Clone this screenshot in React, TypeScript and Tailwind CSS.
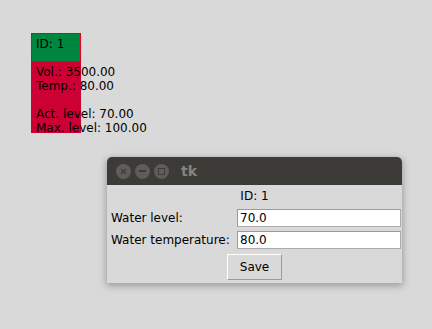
import React from 'react';

const font = { fontFamily: '"DejaVu Sans", Verdana, sans-serif' };

const TitleButton: React.FC<{ children: React.ReactNode }> = ({ children }) => (
  <div className="w-[15px] h-[15px] rounded-full bg-[#5e5d59] flex items-center justify-center">
    {children}
  </div>
);

const Entry: React.FC<{ value: string }> = ({ value }) => (
  <div className="h-[18px] bg-white border border-[#ababab] border-t-[#9a9a9a] border-l-[#9a9a9a] pl-[2px] text-[12px] leading-[16px] text-black">
    {value}
  </div>
);

export default function App() {
  return (
    <div className="w-[432px] h-[329px] bg-[#d9d9d9] overflow-hidden pt-[33px]" style={font}>
      {/* canvas item */}
      <div className="ml-[31px] w-[50px] h-[100px] bg-[#cc0033] text-[12px] leading-[14px] text-black whitespace-nowrap">
        <div className="h-[29px] bg-[#00873f] border border-[#e8001c] pl-[4px] pt-[3px]">ID: 1</div>
        <div className="pl-[5px] pt-[3px]">
          <div>Vol.: 3500.00</div>
          <div>Temp.: 80.00</div>
          <div className="h-[14px]" />
          <div>Act. level: 70.00</div>
          <div>Max. level: 100.00</div>
        </div>
      </div>

      {/* tk window */}
      <div className="ml-[107px] mt-[24px] w-[295px] rounded-t-[5px] shadow-[0_2px_7px_1px_rgba(0,0,0,0.28)]">
        <div className="h-[28px] bg-[#3c3b37] rounded-t-[5px] flex items-center pl-[9px] gap-[4px]">
          <TitleButton>
            <svg width="7" height="7" viewBox="0 0 7 7">
              <path d="M1 1L6 6M6 1L1 6" stroke="#3c3b37" strokeWidth="1.3" />
            </svg>
          </TitleButton>
          <TitleButton>
            <div className="w-[7px] h-[1.5px] bg-[#3c3b37]" />
          </TitleButton>
          <TitleButton>
            <div className="w-[7px] h-[7px] border border-[#3c3b37]" />
          </TitleButton>
          <span className="ml-[8px] text-[14px] font-bold text-[#86847e] leading-none">tk</span>
        </div>
        <div className="bg-[#d9d9d9] pt-[4px] pb-[3px] text-[12px] text-black">
          <div className="h-[14px] leading-[14px] text-center">ID: 1</div>
          <div className="grid grid-cols-[126px_164px] pl-[4px] mt-[6px] items-center">
            <span className="leading-[14px]">Water level:</span>
            <Entry value="70.0" />
          </div>
          <div className="grid grid-cols-[126px_164px] pl-[4px] mt-[4px] items-center">
            <span className="leading-[14px] whitespace-nowrap">Water temperature:</span>
            <Entry value="80.0" />
          </div>
          <div className="flex justify-center mt-[5px]">
            <button className="w-[55px] h-[26px] bg-[#d9d9d9] border border-white border-r-[#9c9c9c] border-b-[#9c9c9c] text-[12px] text-black">
              Save
            </button>
          </div>
        </div>
      </div>
    </div>
  );
}
